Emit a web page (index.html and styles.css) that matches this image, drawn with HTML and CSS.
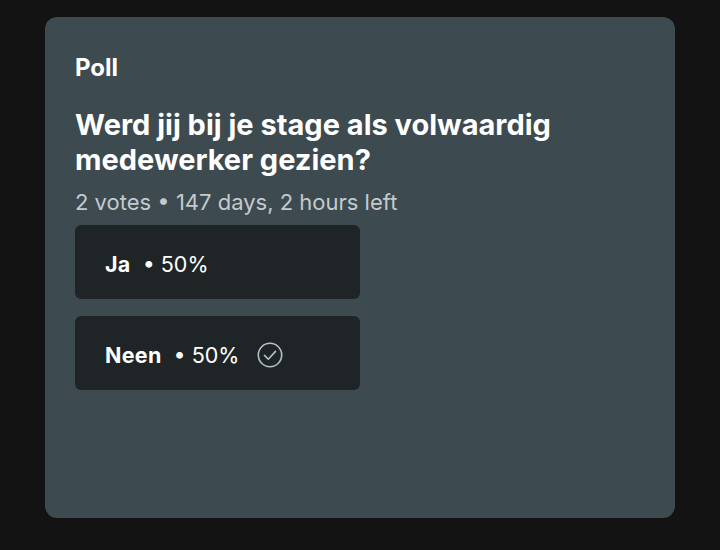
FILE: index.html
```html
<!DOCTYPE html>
<html>
<head>
<meta charset="utf-8">
<link rel="stylesheet" href="styles.css">
</head>
<body>
<div class="card">
  <div class="label">Poll</div>
  <div class="question">Werd jij bij je stage als volwaardig medewerker gezien?</div>
  <div class="meta">2 votes • 147 days, 2 hours left</div>
  <div class="options">
    <div class="option"><span class="name">Ja</span><span class="pct">• 50%</span></div>
    <div class="option"><span class="name">Neen</span><span class="pct">• 50%</span>
      <svg class="check" width="26" height="26" viewBox="0 0 26 26"><circle cx="13" cy="13" r="11.7" fill="none" stroke="#b9c0c3" stroke-width="1.6"/><path d="M7.5 13.4 L11.3 17.2 L18.5 9.4" fill="none" stroke="#b9c0c3" stroke-width="1.6" stroke-linecap="round" stroke-linejoin="round"/></svg>
    </div>
  </div>
</div>
</body>
</html>
```
FILE: styles.css
```css
html, body { margin: 0; padding: 0; }
body {
  background: #131313;
  width: 720px;
  height: 550px;
  font-family: Inter, "Noto Sans", sans-serif;
  padding: 17px 45px 0 45px;
  box-sizing: border-box;
}
.card {
  background: #3d4a50;
  border-radius: 12px;
  height: 501px;
  padding: 36px 30px 0 30px;
  box-sizing: border-box;
  color: #fff;
}
.label {
  font-size: 24px;
  font-weight: 700;
  line-height: 30px;
}
.question {
  font-size: 29px;
  font-weight: 700;
  line-height: 35px;
  margin-top: 24px;
  width: 540px;
}
.meta {
  font-size: 22px;
  color: #c3cace;
  line-height: 28px;
  margin-top: 11px;
}
.options {
  display: flex;
  flex-direction: column;
  gap: 17px;
  margin-top: 9px;
}
.option {
  width: 285px;
  height: 74px;
  background: #1f2527;
  border-radius: 6px;
  display: flex;
  align-items: center;
  padding-left: 30px;
  padding-top: 4px;
  box-sizing: border-box;
  font-size: 21.5px;
}
.name { font-weight: 700; margin-right: 12px; letter-spacing: 0.3px; }
.pct { font-weight: 400; }
.check { margin-left: 18px; }
```
